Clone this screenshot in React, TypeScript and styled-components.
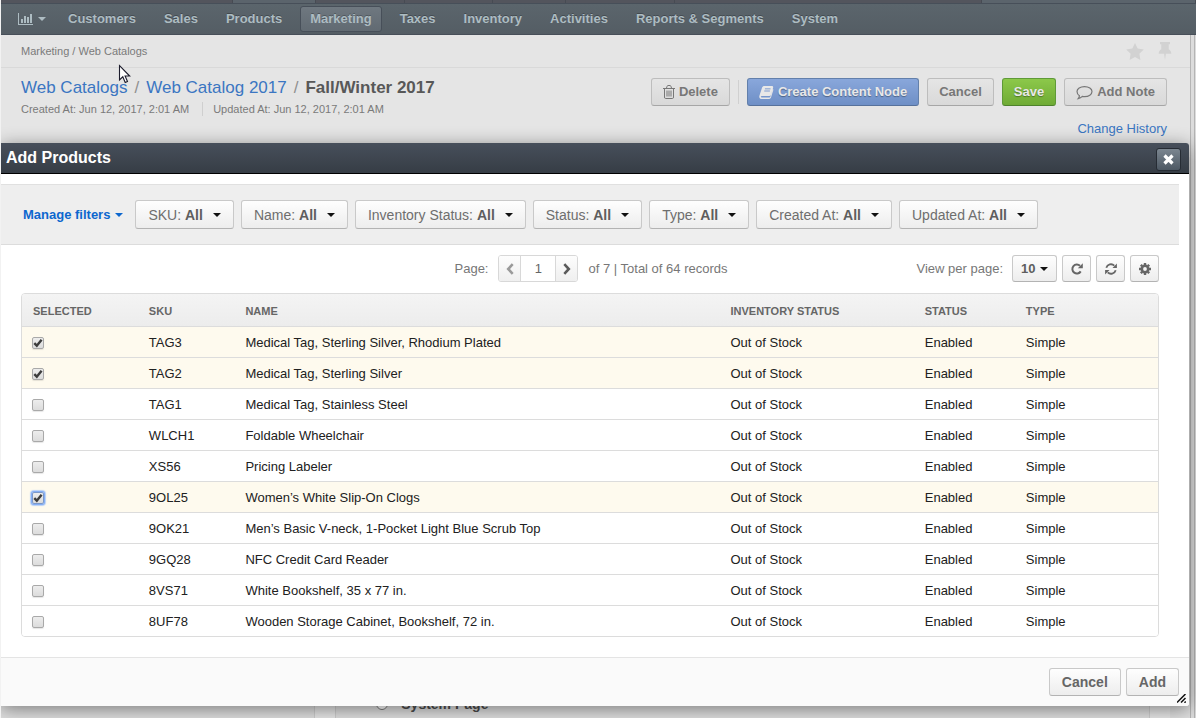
import React, { useState } from "react";
import styled, { createGlobalStyle, css } from "styled-components";

const GlobalStyle = createGlobalStyle`
  * { box-sizing: border-box; }
  html, body { margin: 0; height: 100%; }
  body {
    overflow: hidden;
    background: #e5e5e5;
    font-family: "Liberation Sans", Arial, sans-serif;
    font-size: 13px;
    color: #212121;
  }
  #root { height: 100%; }
  button, input, select { font-family: inherit; margin: 0; }
  a { text-decoration: none; }
`;

/* ---------- page behind the dialog ---------- */

const Page = styled.div`
  height: 100vh;
  display: flex;
  flex-direction: column;
  border-left: 1px solid #f2f2f2;
`;

const UserBar = styled.div`
  flex: none;
  height: 3px;
  display: flex;
  background: #53555d;
`;

const UserBarSlot = styled.div<{ $grow: number; $active?: boolean }>`
  flex: ${(p) => p.$grow} 0 0;
  border-right: 1px solid #474b53;
  background: ${(p) => (p.$active ? "#5b646c" : "transparent")};
`;

const Nav = styled.nav`
  flex: none;
  height: 32px;
  display: flex;
  align-items: center;
  gap: 8px;
  padding-left: 7px;
  border-top: 1px solid #474f59;
  border-bottom: 1px solid #474f59;
  background: linear-gradient(#5b656c, #545d64);
`;

const NavLink = styled.a<{ $active?: boolean; $menu?: boolean }>`
  display: flex;
  align-items: center;
  gap: 4px;
  height: 26px;
  padding: 0 ${(p) => (p.$menu ? 3 : 9)}px 0 9px;
  border: 1px solid transparent;
  border-radius: 3px;
  font-weight: bold;
  line-height: 24px;
  color: #adbcc2;
  text-shadow: 0 -1px 0 rgba(0, 0, 0, 0.25);
  ${(p) =>
    p.$active &&
    css`
      border-color: #474f59;
      background: linear-gradient(#6f7880, #616a72);
    `}
`;

const Body = styled.div`
  flex: 1;
  min-height: 0;
  display: flex;
`;

const Main = styled.main`
  flex: 1;
  min-width: 0;
  display: flex;
  flex-direction: column;
`;

const ScrollRail = styled.div<{ $width: number }>`
  flex: none;
  width: ${(p) => p.$width}px;
  border-left: 1px solid #b4b4b4;
  background: #dcdcdc;
`;

const CrumbBar = styled.div`
  display: flex;
  align-items: center;
  justify-content: space-between;
  height: 33px;
  padding: 0 18px 0 20px;
  border-bottom: 1px solid #d9d9d9;
  font-size: 11px;
  color: #7a7a7a;
  a { color: inherit; }
`;

const CrumbActions = styled.div`
  display: flex;
  align-items: center;
  gap: 14px;
`;

const GhostButton = styled.button`
  display: flex;
  padding: 0;
  border: 0;
  background: none;
  color: #d2d2d2;
`;

const TitleBar = styled.div`
  display: flex;
  justify-content: space-between;
  align-items: flex-start;
  padding: 10px 23px 0 20px;
`;

const Title = styled.h1`
  display: flex;
  gap: 7px;
  margin: 0;
  font-size: 17px;
  line-height: 20px;
  font-weight: normal;
  color: #909090;
  a { color: #3b76c2; }
  strong { color: #585858; }
`;

const Dates = styled.div`
  display: flex;
  margin-top: 4px;
  font-size: 11px;
  line-height: 14px;
  color: #7a7a7a;
  span + span {
    margin-left: 13px;
    padding-left: 10px;
    border-left: 1px solid #cfcfcf;
  }
`;

const Actions = styled.div`
  display: flex;
  gap: 8px;
`;

const Divider = styled.span`
  width: 1px;
  height: 24px;
  margin-top: 2px;
  background: #d0d0d0;
`;

const tones = {
  plain: css`
    color: #777;
    border-color: #bdbdbd;
    border-bottom-color: #a6a6a6;
    background: linear-gradient(#e5e5e5, #d9d9d9);
  `,
  primary: css`
    color: #e8e8e8;
    border-color: #6380ab;
    border-bottom-color: #56719b;
    background: linear-gradient(#89a7db, #6e8fc6);
    text-shadow: 0 1px 1px rgba(0, 0, 0, 0.35);
  `,
  success: css`
    color: #e8e8e8;
    border-color: #5f9a38;
    border-bottom-color: #4e822c;
    background: linear-gradient(#8cc84a, #6fab35);
    text-shadow: 0 1px 1px rgba(0, 0, 0, 0.35);
  `,
};

const ActionButton = styled.button<{ $tone?: keyof typeof tones }>`
  display: flex;
  align-items: center;
  gap: 4px;
  height: 28px;
  padding: 0 11px 2px;
  border: 1px solid;
  border-radius: 3px;
  font-size: 13px;
  font-weight: bold;
  svg { margin-top: 2px; }
  ${(p) => tones[p.$tone ?? "plain"]}
`;

const HistoryLink = styled.a`
  align-self: flex-end;
  margin: 5px 23px 0 0;
  line-height: 16px;
  color: #3b76c2;
`;

const Columns = styled.div`
  flex: 1;
  display: grid;
  grid-template-columns: 314fr 814fr 20px;
  column-gap: 20px;
  margin-top: 20px;
`;

const TreeColumn = styled.div`
  border-right: 1px solid #cccccc;
  background: #dedede;
`;

const EditorColumn = styled.div`
  display: flex;
  align-items: flex-end;
  padding: 0 0 5px 40px;
  border-left: 1px solid #cccccc;
  border-right: 1px solid #cccccc;
  background: #dedede;
`;

const EdgeColumn = styled.div`
  background: #dedede;
`;

const RadioLabel = styled.label`
  display: flex;
  align-items: center;
  gap: 13px;
  font-size: 14px;
  font-weight: bold;
  line-height: 18px;
  color: #4c4c4c;
  input { width: 12px; height: 12px; margin: 0; }
`;

/* ---------- dialog ---------- */

const Dialog = styled.section`
  position: absolute;
  top: 143px;
  left: 1px;
  right: 7px;
  border-radius: 0 3px 3px 0;
  background: #fff;
  box-shadow: 0 3px 18px rgba(0, 0, 0, 0.45);
  clip-path: inset(-30px -30px -30px 0);
`;

const DialogHeader = styled.header`
  display: flex;
  align-items: center;
  justify-content: space-between;
  height: 31px;
  padding: 0 8px 0 5px;
  border-bottom: 1px solid #000;
  border-radius: 0 3px 0 0;
  background: linear-gradient(#474f5b, #363d45);
`;

const DialogTitle = styled.h2`
  margin: 0;
  font-size: 16px;
  line-height: 30px;
  color: #fff;
`;

const CloseButton = styled.button`
  display: flex;
  align-items: center;
  justify-content: center;
  width: 25px;
  height: 23px;
  margin-top: 3px;
  padding: 0;
  border: 1px solid #262c34;
  border-radius: 3px;
  background: linear-gradient(#7b8690, #4d5863);
  color: #fff;
`;

const FilterBar = styled.div`
  display: flex;
  align-items: center;
  gap: 7px;
  height: 61px;
  margin: 10px 10px 0 0;
  padding-left: 22px;
  border-top: 1px solid #e0e0e0;
  border-bottom: 1px solid #dcdcdc;
  background: #eee;
`;

const ManageButton = styled.button`
  display: flex;
  align-items: center;
  gap: 5px;
  margin-right: 5px;
  padding: 0;
  border: 0;
  background: none;
  font-size: 13px;
  font-weight: bold;
  color: #0c67ce;
`;

const raised = css`
  border: 1px solid #c9c9c9;
  border-bottom-color: #b3b3b3;
  border-radius: 3px;
  background: linear-gradient(#fefefe, #ededed);
  color: #666;
`;

const FilterButton = styled.button`
  ${raised}
  display: flex;
  align-items: center;
  gap: 10px;
  height: 29px;
  padding: 0 12px;
  font-size: 14px;
  color: #6e6e6e;
  white-space: nowrap;
  strong { color: #5e5e5e; }
`;

const Toolbar = styled.div`
  display: grid;
  grid-template-columns: 1fr auto 1fr;
  align-items: center;
  padding: 10px 30px 11px 22px;
  color: #777;
`;

const Pager = styled.div`
  grid-column: 2;
  display: flex;
  align-items: center;
  gap: 10px;
`;

const PageBox = styled.div`
  display: flex;
  height: 27px;
  border: 1px solid #d8d8d8;
  border-radius: 3px;
  overflow: hidden;
`;

const PageStep = styled.button`
  display: flex;
  align-items: center;
  justify-content: center;
  width: 21px;
  padding: 0;
  border: 0;
  background: linear-gradient(#fdfdfd, #efefef);
  color: #5a5a5a;
  &:disabled { color: #9a9a9a; }
`;

const PageInput = styled.input`
  width: 36px;
  padding: 0;
  border: 0;
  border-left: 1px solid #d8d8d8;
  border-right: 1px solid #d8d8d8;
  background: #fff;
  font-size: 13px;
  text-align: center;
  color: #666;
`;

const ToolGroup = styled.div`
  grid-column: 3;
  justify-self: end;
  display: flex;
  align-items: center;
  gap: 5px;
`;

const SizeLabel = styled.label`
  margin-right: 4px;
`;

const SizePicker = styled.div`
  ${raised}
  display: flex;
  align-items: center;
  gap: 4px;
  height: 27px;
  padding: 0 8px;
  select {
    appearance: none;
    padding: 0;
    border: 0;
    background: none;
    font-size: 13px;
    font-weight: bold;
    color: #5e5e5e;
  }
`;

const ToolButton = styled.button`
  ${raised}
  display: flex;
  align-items: center;
  justify-content: center;
  width: 29px;
  height: 27px;
  padding: 0;
`;

const GridFrame = styled.div`
  margin: 0 30px 20px 20px;
  border: 1px solid #dcdcdc;
  border-radius: 4px;
  overflow: hidden;
`;

const Grid = styled.table`
  width: 100%;
  table-layout: fixed;
  border-collapse: separate;
  border-spacing: 0;
  th, td {
    padding: 0 0 0 11px;
    text-align: left;
    white-space: nowrap;
  }
  th { padding-top: 2px; }
`;

const HeadCell = styled.th`
  height: 33px;
  border-bottom: 1px solid #dcdcdc;
  font-size: 11px;
  color: #666;
`;

const HeadRow = styled.tr`
  background: linear-gradient(#f4f4f4, #ececec);
`;

const Row = styled.tr<{ $selected: boolean }>`
  background: ${(p) => (p.$selected ? "#fefaee" : "#fff")};
  td {
    height: 31px;
    border-bottom: 1px solid #dcdcdc;
  }
  &:last-child td { border-bottom: 0; height: 30px; }
`;

const TickBox = styled.span<{ $focused: boolean }>`
  display: grid;
  width: 12px;
  height: 12px;
  margin: 2px 0 0 -1px;
  border-radius: 2px;
  box-shadow: ${(p) => (p.$focused ? "0 0 0 1px #84aef5, 0 0 1px 2px #b9d0f5" : "0 1px 1px rgba(0,0,0,0.1)")};
  > * { grid-area: 1 / 1; }
  input {
    appearance: none;
    width: 12px;
    height: 12px;
    margin: 0;
    border: 1px solid ${(p) => (p.$focused ? "#7c98c8" : "#a9a9a9")};
    border-radius: 2px;
    outline: none;
    background: linear-gradient(#ededed, #dcdcdc);
  }
  svg { pointer-events: none; z-index: 1; }
`;

const DialogFooter = styled.footer`
  display: flex;
  justify-content: flex-end;
  align-items: flex-start;
  gap: 5px;
  height: 49px;
  padding: 10px 10px 0;
  border-top: 1px solid #e4e4e4;
  border-radius: 0 0 3px 0;
  background: #fafafa;
`;

const FooterButton = styled.button`
  ${raised}
  height: 28px;
  padding: 0 12px;
  font-size: 14px;
  font-weight: bold;
`;

const ResizeGrip = styled.svg`
  position: absolute;
  right: 3px;
  bottom: 3px;
`;

const Pointer = styled.svg`
  position: absolute;
  left: 118px;
  top: 64px;
`;

/* ---------- icons ---------- */

const Caret = ({ color = "#111" }: { color?: string }) => (
  <svg width="8" height="4" viewBox="0 0 8 4" aria-hidden="true">
    <path d="M0 0h8L4 4z" fill={color} />
  </svg>
);

const ChartIcon = () => (
  <svg width="16" height="12" viewBox="0 0 16 12" fill="currentColor" aria-hidden="true">
    <path d="M0 0h1v11h14v1H0zM3 6h2v4H3zM6 3h2v7H6zM9 4h2v6H9zM12 1h2v9h-2z" />
  </svg>
);

const StarIcon = () => (
  <svg width="18" height="17" viewBox="0 0 18 17" fill="currentColor" aria-hidden="true">
    <path d="M9 0l2.700 5.600 6.100.9-4.400 4.300 1 6.100L9 14l-5.400 2.900 1-6.100L.2 6.500l6.100-.9z" />
  </svg>
);

const PinIcon = () => (
  <svg width="14" height="18" viewBox="0 0 14 18" fill="currentColor" aria-hidden="true">
    <path d="M2 0h10v2.200h-1.300v5c1.600.8 2.600 2.300 2.600 4.500H7.900L7 18l-.9-6.300H.7c0-2.200 1-3.700 2.600-4.500v-5H2z" />
  </svg>
);

const TrashIcon = () => (
  <svg width="12" height="14" viewBox="0 0 12 14" fill="none" stroke="currentColor" aria-hidden="true">
    <path d="M0 3.500h12M3.500 3l.5-1.500q.3-1 1-1h2q.7 0 1 1L8.500 3M1.500 3.500v8.500q0 1.500 1 1.500h7q1 0 1-1.500V3.500M4 5.500v6M6 5.500v6M8 5.500v6" />
  </svg>
);

const BookIcon = () => (
  <svg width="15" height="15" viewBox="0 0 16 15" aria-hidden="true">
    <path
      d="M5.500.5h8.300q1.700 0 1.300 1.600L12.700 10q-.4 1.300-1.700 1.300H3q-1 0-1.100.7.1.7 1 .7h8.200q.8 0 1.100-.9L14.700 3.800q.8.400.5 1.400l-2.400 7.600Q12.300 14.300 10.900 14.300H2.700Q.9 14.300.4 12.700.1 11.600.6 10.400L3.400 2Q4 .5 5.500.5z"
      fill="#e8e8e8"
    />
    <path d="M6.300 3.600h6M5.600 5.900h6" stroke="#7896cd" />
  </svg>
);

const CommentIcon = () => (
  <svg width="17" height="15" viewBox="0 0 17 15" fill="none" stroke="currentColor" strokeWidth="1.200" aria-hidden="true">
    <path d="M8.500 1.600c4.300 0 7.500 2.200 7.500 5s-3.200 5-7.500 5c-.8 0-1.400 0-2.100-.2-1 1-2.300 1.900-4.200 2.300.7-.9 1.200-1.800 1.200-3C1.900 9.800 1 8.300 1 6.600c0-2.800 3.200-5 7.500-5z" />
  </svg>
);

const CloseIcon = () => (
  <svg width="11" height="11" viewBox="0 0 11 11" stroke="currentColor" strokeWidth="3.200" aria-hidden="true">
    <path d="M1.500 1.500l8 8M9.500 1.500l-8 8" />
  </svg>
);

const Chevron = ({ left }: { left?: boolean }) => (
  <svg width="8" height="12" viewBox="0 0 8 12" fill="none" stroke="currentColor" strokeWidth="2.600" aria-hidden="true">
    <path d={left ? "M6.700 1.200L2.200 6l4.500 4.800" : "M1.300 1.200L5.800 6l-4.500 4.800"} />
  </svg>
);

const RedoIcon = () => (
  <svg width="12" height="12" viewBox="0 0 12 12" aria-hidden="true">
    <path d="M9.700 8.400A4.500 4.500 0 1 1 9 2.800" fill="none" stroke="currentColor" strokeWidth="2" />
    <path d="M11.800.3v5H6.800z" fill="currentColor" />
  </svg>
);

const SyncIcon = () => (
  <svg width="12" height="12" viewBox="0 0 12 12" aria-hidden="true">
    <path d="M1.300 4.800A4.800 4.800 0 0 1 9.300 2.700M10.700 7.200A4.800 4.800 0 0 1 2.700 9.300" fill="none" stroke="currentColor" strokeWidth="1.800" />
    <path d="M11.900.6v4.400H7.500zM.1 11.400V7h4.400z" fill="currentColor" />
  </svg>
);

const GearIcon = () => (
  <svg width="12" height="12" viewBox="0 0 12 12" aria-hidden="true">
    <circle cx="6" cy="6" r="3.200" fill="none" stroke="currentColor" strokeWidth="2.600" />
    <path
      d="M6 0v2M6 10v2M0 6h2M10 6h2M1.800 1.800l1.400 1.400M8.800 8.800l1.400 1.400M10.200 1.800L8.800 3.200M3.200 8.800l-1.400 1.400"
      stroke="currentColor"
      strokeWidth="2.400"
    />
  </svg>
);

const CheckMark = () => (
  <svg width="12" height="12" viewBox="0 0 12 12" fill="none" stroke="#3c3c3c" strokeWidth="2.400" aria-hidden="true">
    <path d="M2.300 6.200l2.500 2.500L9.600 2.700" />
  </svg>
);

/* ---------- data ---------- */

const navItems = ["Customers", "Sales", "Products", "Marketing", "Taxes", "Inventory", "Activities", "Reports & Segments", "System"];

const filters = ["SKU", "Name", "Inventory Status", "Status", "Type", "Created At", "Updated At"];

const products = [
  { sku: "TAG3", name: "Medical Tag, Sterling Silver, Rhodium Plated" },
  { sku: "TAG2", name: "Medical Tag, Sterling Silver" },
  { sku: "TAG1", name: "Medical Tag, Stainless Steel" },
  { sku: "WLCH1", name: "Foldable Wheelchair" },
  { sku: "XS56", name: "Pricing Labeler" },
  { sku: "9OL25", name: "Women’s White Slip-On Clogs" },
  { sku: "9OK21", name: "Men’s Basic V-neck, 1-Pocket Light Blue Scrub Top" },
  { sku: "9GQ28", name: "NFC Credit Card Reader" },
  { sku: "8VS71", name: "White Bookshelf, 35 x 77 in." },
  { sku: "8UF78", name: "Wooden Storage Cabinet, Bookshelf, 72 in." },
];

const columns = [
  { title: "SELECTED", width: "10.2%" },
  { title: "SKU", width: "8.5%" },
  { title: "NAME", width: "42.7%" },
  { title: "INVENTORY STATUS", width: "17.1%" },
  { title: "STATUS", width: "8.9%" },
  { title: "TYPE", width: "12.6%" },
];

export default function App() {
  const [selected, setSelected] = useState<string[]>(["TAG3", "TAG2", "9OL25"]);
  const [focused, setFocused] = useState("9OL25");
  const [page, setPage] = useState("1");

  const toggle = (sku: string) => {
    setFocused(sku);
    setSelected((list) => (list.includes(sku) ? list.filter((s) => s !== sku) : [...list, sku]));
  };

  return (
    <>
      <GlobalStyle />
      <Page>
        <UserBar>
          <UserBarSlot $grow={233} />
          <UserBarSlot $grow={82} $active />
          <UserBarSlot $grow={89} />
          <UserBarSlot $grow={87} />
          <UserBarSlot $grow={73} />
          <UserBarSlot $grow={108} />
          <UserBarSlot $grow={309} />
          <UserBarSlot $grow={214} $active />
        </UserBar>
        <Nav>
          <NavLink href="#" aria-label="Dashboards" $menu>
            <ChartIcon />
            <Caret color="#adbcc2" />
          </NavLink>
          {navItems.map((item) => (
            <NavLink key={item} href="#" $active={item === "Marketing"}>
              {item}
            </NavLink>
          ))}
        </Nav>
        <Body>
          <Main>
            <CrumbBar>
              <span>
                <a href="#">Marketing</a> / <a href="#">Web Catalogs</a>
              </span>
              <CrumbActions>
                <GhostButton aria-label="Favorite"><StarIcon /></GhostButton>
                <GhostButton aria-label="Pin"><PinIcon /></GhostButton>
              </CrumbActions>
            </CrumbBar>
            <TitleBar>
              <div>
                <Title>
                  <a href="#">Web Catalogs</a>
                  <span>/</span>
                  <a href="#">Web Catalog 2017</a>
                  <span>/</span>
                  <strong>Fall/Winter 2017</strong>
                </Title>
                <Dates>
                  <span>Created At: Jun 12, 2017, 2:01 AM</span>
                  <span>Updated At: Jun 12, 2017, 2:01 AM</span>
                </Dates>
              </div>
              <Actions>
                <ActionButton><TrashIcon /> Delete</ActionButton>
                <Divider />
                <ActionButton $tone="primary"><BookIcon /> Create Content Node</ActionButton>
                <ActionButton>Cancel</ActionButton>
                <ActionButton $tone="success">Save</ActionButton>
                <ActionButton><CommentIcon /> Add Note</ActionButton>
              </Actions>
            </TitleBar>
            <HistoryLink href="#">Change History</HistoryLink>
            <Columns>
              <TreeColumn />
              <EditorColumn>
                <RadioLabel>
                  <input type="radio" name="target" />
                  System Page
                </RadioLabel>
              </EditorColumn>
              <EdgeColumn />
            </Columns>
          </Main>
          <ScrollRail $width={4} />
          <ScrollRail $width={2} />
        </Body>
      </Page>

      <Dialog role="dialog" aria-labelledby="dialog-title">
        <DialogHeader>
          <DialogTitle id="dialog-title">Add Products</DialogTitle>
          <CloseButton aria-label="Close"><CloseIcon /></CloseButton>
        </DialogHeader>
        <FilterBar>
          <ManageButton>
            Manage filters <Caret color="#0c67ce" />
          </ManageButton>
          {filters.map((name) => (
            <FilterButton key={name}>
              <span>{name}: <strong>All</strong></span>
              <Caret />
            </FilterButton>
          ))}
        </FilterBar>
        <Toolbar>
          <Pager>
            <label htmlFor="page">Page:</label>
            <PageBox>
              <PageStep aria-label="Previous page" disabled><Chevron left /></PageStep>
              <PageInput id="page" value={page} onChange={(e) => setPage(e.target.value)} />
              <PageStep aria-label="Next page"><Chevron /></PageStep>
            </PageBox>
            <span>of 7 | Total of 64 records</span>
          </Pager>
          <ToolGroup>
            <SizeLabel htmlFor="page-size">View per page:</SizeLabel>
            <SizePicker>
              <select id="page-size" defaultValue="10">
                <option>10</option>
                <option>25</option>
                <option>50</option>
              </select>
              <Caret />
            </SizePicker>
            <ToolButton aria-label="Refresh"><RedoIcon /></ToolButton>
            <ToolButton aria-label="Reset"><SyncIcon /></ToolButton>
            <ToolButton aria-label="Grid settings"><GearIcon /></ToolButton>
          </ToolGroup>
        </Toolbar>
        <GridFrame>
          <Grid>
            <colgroup>
              {columns.map((c) => (
                <col key={c.title} width={c.width} />
              ))}
            </colgroup>
            <thead>
              <HeadRow>
                {columns.map((c) => (
                  <HeadCell key={c.title} scope="col">{c.title}</HeadCell>
                ))}
              </HeadRow>
            </thead>
            <tbody>
              {products.map((p) => (
                <Row key={p.sku} $selected={selected.includes(p.sku)}>
                  <td>
                    <TickBox $focused={focused === p.sku}>
                      <input
                        type="checkbox"
                        aria-label={`Select ${p.sku}`}
                        checked={selected.includes(p.sku)}
                        onChange={() => toggle(p.sku)}
                      />
                      {selected.includes(p.sku) && <CheckMark />}
                    </TickBox>
                  </td>
                  <td>{p.sku}</td>
                  <td>{p.name}</td>
                  <td>Out of Stock</td>
                  <td>Enabled</td>
                  <td>Simple</td>
                </Row>
              ))}
            </tbody>
          </Grid>
        </GridFrame>
        <DialogFooter>
          <FooterButton>Cancel</FooterButton>
          <FooterButton>Add</FooterButton>
        </DialogFooter>
        <ResizeGrip width="9" height="9" viewBox="0 0 9 9" stroke="#111" strokeWidth="1.500" aria-hidden="true">
          <path d="M0 8.500L8.500 0M4 8.500L8.500 4M7.500 8.800l1.300-1.300" />
        </ResizeGrip>
      </Dialog>

      <Pointer width="13" height="20" viewBox="0 0 13 20" aria-hidden="true">
        <path d="M1.500 1.500v14.500l3.300-3.200 2.400 5.700 2.300-1-2.400-5.500h4.600z" fill="#fff" stroke="#1c1c2c" strokeWidth="1.100" />
      </Pointer>
    </>
  );
}
